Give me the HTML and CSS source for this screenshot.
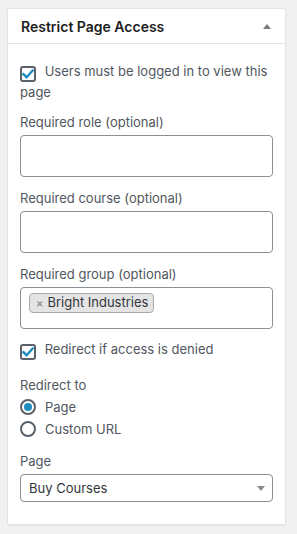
FILE: index.html
```html
<!DOCTYPE html>
<html lang="en">
<head>
  <meta charset="UTF-8">
  <meta name="viewport" content="width=device-width, initial-scale=1.0">
  <title>Restrict Page Access</title>
  <link rel="stylesheet" href="styles.css">
</head>
<body>
  <div class="panel">
    <div class="panel-header">
      <h2 class="panel-title">Restrict Page Access</h2>
      <span class="toggle-arrow"></span>
    </div>

    <div class="panel-body">
      <p class="check-line">
        <span class="checkbox">
          <svg width="12" height="10" viewBox="0 0 12 10"><path d="M1.5 5.2 L4.6 8.2 L10.6 1.6" fill="none" stroke="#1e8cbe" stroke-width="2.4" stroke-linecap="square"/></svg>
        </span>
        Users must be logged in to view this page
      </p>

      <div class="field">
        <label class="field-label">Required role (optional)</label>
        <div class="text-box"></div>
      </div>

      <div class="field">
        <label class="field-label">Required course (optional)</label>
        <div class="text-box"></div>
      </div>

      <div class="field">
        <label class="field-label">Required group (optional)</label>
        <div class="text-box tag-box">
          <span class="tag"><span class="tag-remove">×</span>Bright Industries</span>
        </div>
      </div>

      <p class="check-line redirect-check">
        <span class="checkbox">
          <svg width="12" height="10" viewBox="0 0 12 10"><path d="M1.5 5.2 L4.6 8.2 L10.6 1.6" fill="none" stroke="#1e8cbe" stroke-width="2.4" stroke-linecap="square"/></svg>
        </span>
        Redirect if access is denied
      </p>

      <div class="redirect-to">
        <div class="field-label">Redirect to</div>
        <div class="radio-line"><span class="radio checked"></span>Page</div>
        <div class="radio-line"><span class="radio"></span>Custom URL</div>
      </div>

      <div class="field page-field">
        <label class="field-label">Page</label>
        <div class="select-box">
          <span class="select-value">Buy Courses</span>
          <span class="select-arrow"></span>
        </div>
      </div>
    </div>
  </div>
</body>
</html>
```

FILE: styles.css
```css
body {
  margin: 0;
  padding: 8px 11px 10px 7px;
  background-color: #f1f1f1;
  font-family: Inter, "Noto Sans", sans-serif;
  font-size: 13px;
  color: #50575e;
}

.panel {
  background-color: #fff;
  border: 1px solid #e2e4e7;
  border-radius: 2px;
  box-shadow: 0 1px 1px rgba(0, 0, 0, 0.04);
}

.panel-header {
  display: flex;
  align-items: center;
  justify-content: space-between;
  height: 34px;
  padding: 0 13px 0 13px;
  border-bottom: 1px solid #e2e4e7;
}

.panel-title {
  margin: 0;
  font-size: 14px;
  font-weight: 600;
  color: #1e1e1e;
}

.toggle-arrow {
  width: 0;
  height: 0;
  border-left: 4px solid transparent;
  border-right: 4px solid transparent;
  border-bottom: 5px solid #7b7b7b;
  margin-right: 1px;
}

.panel-body {
  padding: 17px 12px 22px 12px;
}

.check-line {
  margin: 0;
  line-height: 20px;
}

.checkbox {
  display: inline-flex;
  align-items: center;
  justify-content: center;
  box-sizing: border-box;
  width: 16px;
  height: 16px;
  border: 2px solid #5b6168;
  border-radius: 3px;
  vertical-align: -3px;
  margin-right: 5px;
}

.field {
  margin-top: 10px;
}

.field + .field {
  margin-top: 11px;
}

.field-label {
  display: block;
  line-height: 20px;
  margin-bottom: 3px;
}

.text-box {
  box-sizing: border-box;
  height: 42px;
  border: 1px solid #8c8f94;
  border-radius: 4px;
}

.tag-box {
  padding: 5px 8px;
}

.tag {
  display: inline-block;
  line-height: 17px;
  padding: 0 5px 0 6px;
  background-color: #e4e4e4;
  border: 1px solid #aaa;
  border-radius: 4px;
  color: #32373c;
}

.tag-remove {
  color: #999;
  font-weight: bold;
  font-size: 11px;
  margin-right: 4px;
}

.redirect-check {
  margin-top: 10px;
}

.redirect-to {
  margin-top: 15px;
}

.redirect-to .field-label {
  margin-bottom: 2px;
}

.radio-line {
  display: flex;
  align-items: center;
  line-height: 20px;
  margin-bottom: 2px;
}

.radio {
  box-sizing: border-box;
  display: flex;
  align-items: center;
  justify-content: center;
  width: 16px;
  height: 16px;
  border: 2px solid #5b6168;
  border-radius: 50%;
  margin-right: 9px;
}

.radio.checked::before {
  content: "";
  width: 8px;
  height: 8px;
  border-radius: 50%;
  background-color: #1e8cbe;
}

.page-field {
  margin-top: 12px;
}

.select-box {
  box-sizing: border-box;
  display: flex;
  align-items: center;
  justify-content: space-between;
  height: 28px;
  padding: 0 7px 0 8px;
  border: 1px solid #8c8f94;
  border-radius: 4px;
  color: #32373c;
}

.select-arrow {
  width: 0;
  height: 0;
  border-left: 4px solid transparent;
  border-right: 4px solid transparent;
  border-top: 5px solid #888;
}
```
